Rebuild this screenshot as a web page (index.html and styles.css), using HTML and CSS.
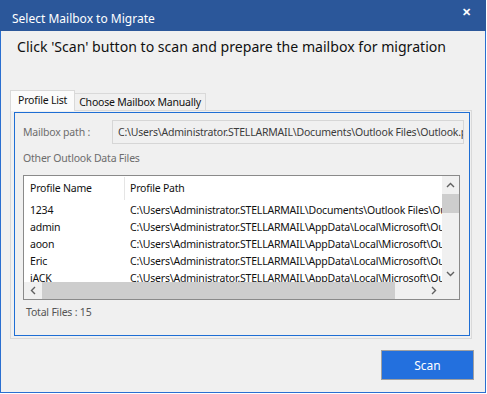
FILE: index.html
```html
<!DOCTYPE html>
<html lang="en">
<head>
    <meta charset="UTF-8" />
    <title>Select Mailbox to Migrate</title>
    <link rel="stylesheet" href="styles.css">
</head>
<body>

<div class="window">

    <!-- BARRE DE TITRE -->
    <div class="titlebar">
        <span class="title">Select Mailbox to Migrate</span>
        <span class="close">&#x2715;</span>
    </div>

    <div class="content">
        <h1>Click 'Scan' button to scan and prepare the mailbox for migration</h1>

        <!-- ONGLETS -->
        <div class="tabs">
            <div class="tab active">Profile List</div>
            <div class="tab">Choose Mailbox Manually</div>
        </div>

        <div class="tab-panel">
            <div class="panel-inner">
                <div class="path-row">
                    <label>Mailbox path :</label>
                    <div class="path-box">C:\Users\Administrator.STELLARMAIL\Documents\Outlook Files\Outlook.pst</div>
                </div>

                <div class="section-label">Other Outlook Data Files</div>

                <!-- Liste des profils -->
                <div class="listview">
                    <div class="list-body">
                        <div class="list-row header">
                            <div class="col-name">Profile Name</div>
                            <div class="col-path">Profile Path</div>
                        </div>
                        <div class="list-row">
                            <div class="col-name">1234</div>
                            <div class="col-path">C:\Users\Administrator.STELLARMAIL\Documents\Outlook Files\Outlook.pst</div>
                        </div>
                        <div class="list-row">
                            <div class="col-name">admin</div>
                            <div class="col-path">C:\Users\Administrator.STELLARMAIL\AppData\Local\Microsoft\Outlook\admin.ost</div>
                        </div>
                        <div class="list-row">
                            <div class="col-name">aoon</div>
                            <div class="col-path">C:\Users\Administrator.STELLARMAIL\AppData\Local\Microsoft\Outlook\aoon.ost</div>
                        </div>
                        <div class="list-row">
                            <div class="col-name">Eric</div>
                            <div class="col-path">C:\Users\Administrator.STELLARMAIL\AppData\Local\Microsoft\Outlook\eric.ost</div>
                        </div>
                        <div class="list-row">
                            <div class="col-name">jACK</div>
                            <div class="col-path">C:\Users\Administrator.STELLARMAIL\AppData\Local\Microsoft\Outlook\jack.ost</div>
                        </div>
                    </div>

                    <!-- Barre verticale -->
                    <div class="vscroll">
                        <div class="arrow">
                            <svg width="9" height="6" viewBox="0 0 9 6"><polyline points="1,5 4.5,1.5 8,5" fill="none" stroke="#606060" stroke-width="1.4"/></svg>
                        </div>
                        <div class="vtrack"><div class="vthumb"></div></div>
                        <div class="arrow">
                            <svg width="9" height="6" viewBox="0 0 9 6"><polyline points="1,1 4.5,4.5 8,1" fill="none" stroke="#606060" stroke-width="1.4"/></svg>
                        </div>
                    </div>

                    <!-- Barre horizontale -->
                    <div class="hscroll">
                        <div class="arrow">
                            <svg width="6" height="9" viewBox="0 0 6 9"><polyline points="5,1 1.5,4.5 5,8" fill="none" stroke="#606060" stroke-width="1.4"/></svg>
                        </div>
                        <div class="htrack"><div class="hthumb"></div></div>
                        <div class="arrow">
                            <svg width="6" height="9" viewBox="0 0 6 9"><polyline points="1,1 4.5,4.5 1,8" fill="none" stroke="#606060" stroke-width="1.4"/></svg>
                        </div>
                    </div>
                    <div class="corner"></div>
                </div>

                <div class="total">Total Files : 15</div>
            </div>
        </div>

        <div class="actions">
            <button class="btn-scan">Scan</button>
        </div>
    </div>
</div>

</body>
</html>
```

FILE: styles.css
```css
/* ------------------------
   STYLES GLOBAUX
------------------------- */
body {
    margin: 0;
    background: #fff;
    font-family: "Noto Sans", "Open Sans", sans-serif;
    font-size: 10.5px;
    letter-spacing: -0.2px;
    color: #000;
}

.window {
    width: 486px;
    height: 393px;
    box-sizing: border-box;
    border: 1px solid #2a6fd0;
    border-top: none;
    background: #f0f0f0;
    display: flex;
    flex-direction: column;
}

/* Barre de titre */
.titlebar {
    height: 31px;
    margin: 0 -1px;
    background: #2b579a;
    color: #fff;
    display: flex;
    justify-content: space-between;
    align-items: flex-start;
    padding: 0 15px 0 12px;
    letter-spacing: 0;
}

.title {
    margin-top: 11px;
    line-height: 16px;
    font-size: 12px;
}

.close {
    margin-top: 4px;
    font-size: 11px;
    font-weight: bold;
    line-height: 16px;
}

.content {
    flex: 1;
    padding: 5px 0 0 9px;
    display: flex;
    flex-direction: column;
}

h1 {
    margin: 0 0 0 7px;
    font-size: 14.1px;
    font-weight: normal;
    letter-spacing: 0;
    line-height: 22px;
    color: #111;
}

/* Onglets */
.tabs {
    display: flex;
    align-items: flex-end;
    height: 20px;
    margin-top: 32px;
    position: relative;
    z-index: 1;
}

.tab {
    box-sizing: border-box;
    height: 17px;
    padding: 0 4px;
    border: 1px solid #d9d9d9;
    border-left: none;
    border-bottom: none;
    line-height: 16px;
    color: #111;
}

.tab.active {
    height: 21px;
    margin-bottom: -1px;
    padding: 0 7px;
    border-left: 1px solid #d9d9d9;
    background: #fbfbfb;
    line-height: 19px;
}

.tab-panel {
    width: 462px;
    height: 229px;
    box-sizing: border-box;
    border: 1px solid #d9d9d9;
    padding: 1px 1px 2px 3px;
}

.panel-inner {
    height: 224px;
    box-sizing: border-box;
    border: 1px solid #1e6ed4;
    padding: 7px 5px 0 8px;
}

.path-row {
    display: flex;
    align-items: center;
}

.path-row label {
    width: 89px;
    color: #6d6d6d;
}

.path-box {
    width: 352px;
    height: 24px;
    box-sizing: border-box;
    border: 1px solid #d6d6d6;
    padding: 0 5px;
    line-height: 22px;
    white-space: nowrap;
    overflow: hidden;
    color: #3c3c3c;
}

.section-label {
    margin-top: 6px;
    line-height: 16px;
    color: #6d6d6d;
}

/* Liste */
.listview {
    margin-top: 9px;
    width: 437px;
    height: 125px;
    box-sizing: border-box;
    border: 1px solid #8a8a8a;
    background: #fff;
    display: grid;
    grid-template-columns: 1fr 17px;
    grid-template-rows: 1fr 17px;
}

.list-body {
    overflow: hidden;
}

.list-row {
    display: flex;
    height: 17px;
    line-height: 18px;
    white-space: nowrap;
    color: #111;
}

.list-row.header {
    height: 25px;
    line-height: 25px;
}

.col-name {
    width: 94px;
    flex-shrink: 0;
    padding-left: 6px;
}

.col-path {
    padding-left: 5px;
}

.list-row.header .col-path {
    border-left: 1px solid #e5e5e5;
    height: 23px;
    margin-top: 1px;
    line-height: 23px;
}

.list-row:not(.header) .col-path {
    margin-left: 1px;
}

.vscroll {
    background: #f0f0f0;
    display: flex;
    flex-direction: column;
}

.arrow {
    width: 17px;
    height: 17px;
    flex-shrink: 0;
    display: flex;
    align-items: center;
    justify-content: center;
}

.vtrack {
    flex: 1;
    padding-top: 1px;
}

.vthumb {
    height: 19px;
    background: #cdcdcd;
}

.hscroll {
    background: #f0f0f0;
    display: flex;
}

.htrack {
    flex: 1;
    padding-left: 1px;
}

.hthumb {
    width: 353px;
    height: 17px;
    background: #cdcdcd;
}

.corner {
    background: #f0f0f0;
}

.total {
    margin-top: 4px;
    padding-left: 3px;
    line-height: 16px;
    color: #555;
}

/* Bouton */
.actions {
    display: flex;
    justify-content: flex-end;
    margin-top: 11px;
    padding-right: 11px;
}

.btn-scan {
    width: 93px;
    height: 30px;
    border: 1px solid #a0a0a0;
    background: #2370de;
    color: #fff;
    font-family: inherit;
    font-size: 12px;
    letter-spacing: 0;
}
```
